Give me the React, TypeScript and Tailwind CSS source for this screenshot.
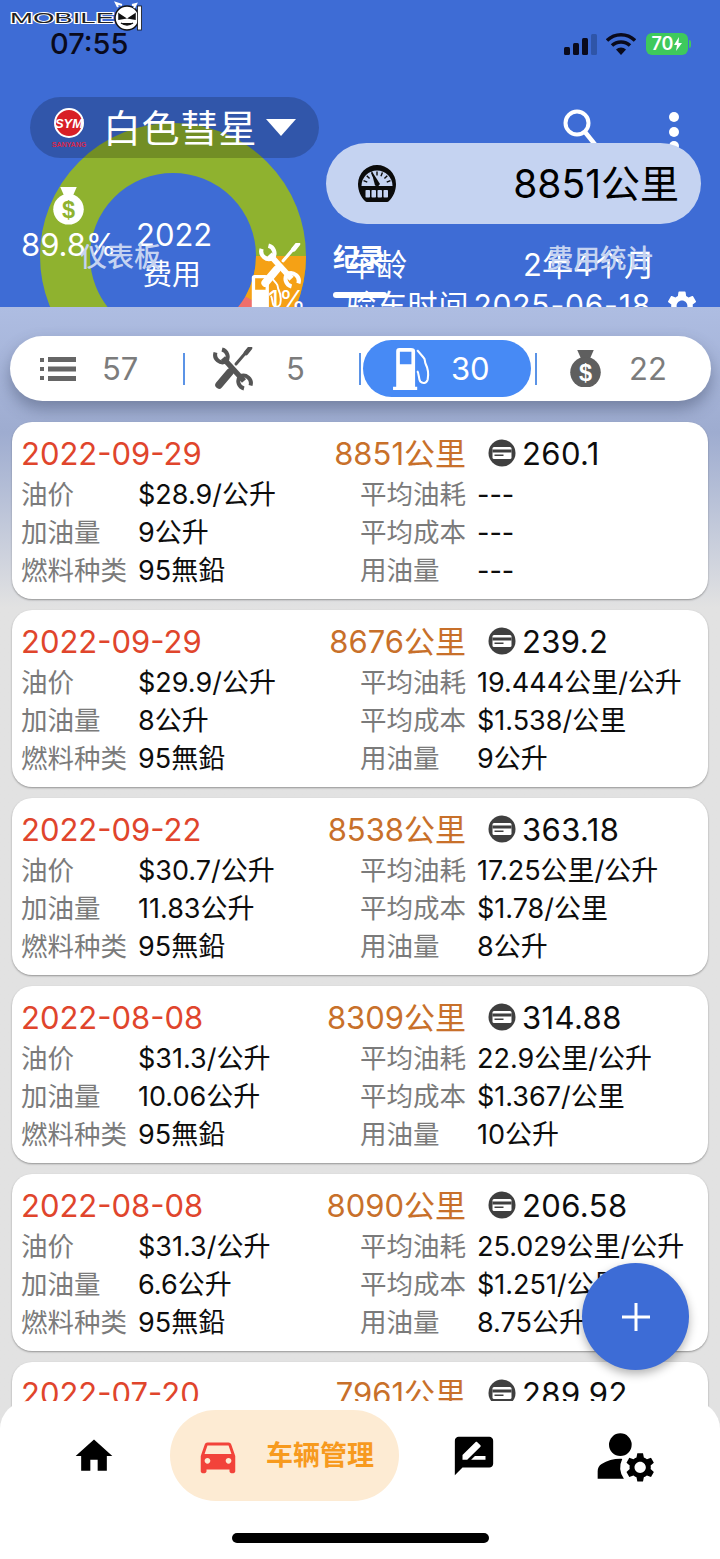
import React from "react";
import { MdHome, MdDirectionsCar, MdRateReview, MdManageAccounts, MdSettings } from "react-icons/md";

type Rec = { date: string; km: string; fee: string; price: string; vol: string; avg: string; cost: string; used: string };

const records: Rec[] = [
  { date: "2022-09-29", km: "8851公里", fee: "260.1", price: "$28.9/公升", vol: "9公升", avg: "---", cost: "---", used: "---" },
  { date: "2022-09-29", km: "8676公里", fee: "239.2", price: "$29.9/公升", vol: "8公升", avg: "19.444公里/公升", cost: "$1.538/公里", used: "9公升" },
  { date: "2022-09-22", km: "8538公里", fee: "363.18", price: "$30.7/公升", vol: "11.83公升", avg: "17.25公里/公升", cost: "$1.78/公里", used: "8公升" },
  { date: "2022-08-08", km: "8309公里", fee: "314.88", price: "$31.3/公升", vol: "10.06公升", avg: "22.9公里/公升", cost: "$1.367/公里", used: "10公升" },
  { date: "2022-08-08", km: "8090公里", fee: "206.58", price: "$31.3/公升", vol: "6.6公升", avg: "25.029公里/公升", cost: "$1.251/公里", used: "8.75公升" },
  { date: "2022-07-20", km: "7961公里", fee: "289.92", price: "$31.3/公升", vol: "9.06公升", avg: "---", cost: "---", used: "---" },
];

function MoneyBag({ size, color, dollar }: { size: number; color: string; dollar: string }) {
  return (
    <svg width={size} height={size * 1.14} viewBox="0 0 28 32">
      <path d="M7 0h14l-3.500 8h-7z" fill={color} />
      <circle cx="14" cy="19" r="13" fill={color} />
      <text x="14" y="26.500" textAnchor="middle" fontSize="20" fontWeight="700" fontFamily="Liberation Sans" fill={dollar}>$</text>
    </svg>
  );
}

function Pump({ size }: { size: number }) {
  return (
    <svg width={size * 0.95} height={size} viewBox="0 0 38 40">
      <path fillRule="evenodd" d="M4 3Q4 0 7 0h11q4 0 4 3v34h2v3H1v-3h3zM7.500 3.500v12h11v-12z" fill="#fff" />
      <path d="M24 2l6 7c2 2 1 4 2 6 2 4 3 10 2 15-1 4-5 4-7 2-2-3-1-8-3-10" fill="none" stroke="#fff" strokeWidth="2" />
    </svg>
  );
}

function Tools({ size, color }: { size: number; color: string }) {
  return (
    <svg width={size} height={size * 1.1} viewBox="0 0 40 44" fill="none" stroke={color}>
      <path d="M10 11L31 34" strokeWidth="5.500" />
      <path d="M2.500 5.500A7.500 7.500 0 0 0 13 14.500 7.500 7.500 0 0 0 9 2.500" strokeWidth="4" />
      <path d="M37.500 38.500A7.500 7.500 0 0 0 27 29.500 7.500 7.500 0 0 0 31 41.500" strokeWidth="4" />
      <path d="M35 3L23 17" strokeWidth="3" strokeLinecap="round" />
      <path d="M37 1L33 6" strokeWidth="4.500" strokeLinecap="round" />
      <path d="M17 25L6 38" strokeWidth="7.500" strokeLinecap="round" />
    </svg>
  );
}

function CardIcon() {
  return (
    <svg width="28" height="28" viewBox="0 0 28 28" className="shrink-0">
      <circle cx="14" cy="14" r="13.500" fill="#3f3f3f" />
      <rect x="4.500" y="8" width="19" height="12" rx="1.500" fill="#fff" />
      <rect x="4.500" y="10.500" width="19" height="3" fill="#3f3f3f" />
      <rect x="6.500" y="15.500" width="9" height="1.500" fill="#3f3f3f" />
    </svg>
  );
}

function Gauge() {
  const ticks = [-68, -45, -22, 0, 22, 45, 68];
  return (
    <svg width="40" height="38" viewBox="0 0 40 38">
      <path d="M1 19a19 19 0 0 1 38 0c0 7-3 13-7 17a3 3 0 0 1-2 1H10a3 3 0 0 1-2-1C4 32 1 26 1 19z" fill="#0b0b0b" />
      <path d="M4.500 21a15.500 15.500 0 0 1 31 0z" fill="#c5d3f1" />
      {ticks.map((a) => (
        <rect key={a} x="19.300" y="6.500" width="1.400" height="4" fill="#0b0b0b" transform={`rotate(${a} 20 21)`} />
      ))}
      <path d="M14 5l9 14-2 2.500-3-1z" fill="#0b0b0b" />
      {[8.500, 14.500, 20.500, 26.500].map((x) => (
        <rect key={x} x={x} y="25" width="4.500" height="7.500" rx="0.800" fill="#c5d3f1" />
      ))}
    </svg>
  );
}

function Logo() {
  return (
    <svg width="144" height="32" viewBox="0 0 144 32">
      <text x="2" y="23" fontSize="15" fontWeight="400" fontFamily="Liberation Sans" textLength="104" lengthAdjust="spacingAndGlyphs" fill="#222" stroke="#fff" strokeWidth="1.800" style={{ paintOrder: "stroke" }}>MOBILE</text>
      <ellipse cx="119" cy="18" rx="12" ry="12" fill="#fff" stroke="#111" strokeWidth="1.500" />
      <path d="M110 7l-2-4 6 2M124 5l4-1-2 4" fill="none" stroke="#fff" strokeWidth="2" />
      <path d="M111 14l6 4-6 1zM127 14l-6 4 6 1zM113 23q6 4 12 0" fill="#111" stroke="#111" strokeWidth="1.500" />
      <rect x="129.500" y="6" width="4" height="24" fill="#fff" stroke="#111" strokeWidth="0.800" />
    </svg>
  );
}

function Row({ a, b, c, d }: { a: string; b: string; c: string; d: string }) {
  return (
    <div className="grid grid-cols-[117px_222px_117px_1fr] h-[38px] items-center whitespace-nowrap leading-none">
      <span className="text-[26.500px] text-[#7b7b7b]">{a}</span>
      <span className="text-[27px] text-[#0d0d0d]">{b}</span>
      <span className="text-[26.500px] text-[#7b7b7b]">{c}</span>
      <span className="text-[27px] text-[#0d0d0d]">{d}</span>
    </div>
  );
}

function RecordCard({ r }: { r: Rec }) {
  return (
    <div className="h-[177px] shrink-0 rounded-[20px] bg-white shadow-[0_1px_2px_rgba(0,0,0,0.35)] pl-[9px] pr-[10px] pt-[13px]">
      <div className="flex items-center h-[36px] mb-[4px] text-[31px] leading-none whitespace-nowrap">
        <span className="w-[200px] text-[#e0452c]">{r.date}</span>
        <span className="w-[245px] text-right text-[#c8702a]">{r.km}</span>
        <span className="ml-[22px] flex items-center gap-[6px] text-[#0d0d0d] tracking-[0.4px]"><CardIcon />{r.fee}</span>
      </div>
      <Row a="油价" b={r.price} c="平均油耗" d={r.avg} />
      <Row a="加油量" b={r.vol} c="平均成本" d={r.cost} />
      <Row a="燃料种类" b="95無鉛" c="用油量" d={r.used} />
    </div>
  );
}

function Sep({ className = "" }: { className?: string }) {
  return <span className={"block w-[2px] h-[32px] bg-[#5b93e6] shrink-0 " + className} />;
}

function Header() {
  return (
    <header className="relative h-[307px] shrink-0 overflow-hidden bg-[#3e6cd5] text-white">
      <svg className="absolute left-[30px] top-[113px]" width="286" height="286" viewBox="-143 -143 286 286">
        <circle r="108" fill="none" stroke="#8fb22f" strokeWidth="50" />
        <path d="M108 0A108 108 0 0 1 94 53" fill="none" stroke="#f5a115" strokeWidth="50" />
        <path d="M94 53A108 108 0 0 1 80 72" fill="none" stroke="#ef6f6c" strokeWidth="50" />
      </svg>

      <div className="absolute left-[30px] top-[97px] w-[289px] h-[61px] rounded-full bg-black/20 flex items-center pl-[21px]">
        <svg width="36" height="42" viewBox="0 0 36 42" className="shrink-0">
          <circle cx="18" cy="16" r="14" fill="#d81f26" stroke="#fff" strokeWidth="2" />
          <text x="18" y="21" textAnchor="middle" fontSize="13" fontWeight="700" fontStyle="italic" fontFamily="Liberation Sans" fill="#fff">SYM</text>
          <text x="18" y="40" textAnchor="middle" fontSize="7" fontWeight="700" fontFamily="Liberation Sans" fill="#d8264a">SANYANG</text>
        </svg>
        <span className="ml-[16px] text-[38px] leading-none tracking-[0.5px] whitespace-nowrap">白色彗星</span>
        <span className="ml-[9px] w-0 h-0 border-l-[15px] border-r-[15px] border-t-[17px] border-l-transparent border-r-transparent border-t-white" />
      </div>

      <svg className="absolute left-[562px] top-[108px]" width="38" height="40" viewBox="0 0 38 40">
        <circle cx="15" cy="15" r="11.500" fill="none" stroke="#fff" strokeWidth="4" />
        <path d="M23 24l12 15" stroke="#fff" strokeWidth="4.500" />
      </svg>
      <div className="absolute left-[669px] top-[112px] flex flex-col gap-[4.500px]">
        <span className="w-[10px] h-[10px] rounded-full bg-white" />
        <span className="w-[10px] h-[10px] rounded-full bg-white" />
        <span className="w-[10px] h-[10px] rounded-full bg-white" />
      </div>

      <span className="absolute left-[21px] top-[227px] text-[31px] leading-[36px]">89.8%</span>
      <span className="absolute left-[136px] top-[216px] text-[31px] leading-[38px]">2022</span>
      <span className="absolute left-[143px] top-[257px] text-[29px] leading-[36px]">费用</span>
      <div className="absolute left-[52px] top-[187px]"><MoneyBag size={33} color="#fff" dollar="#8fb22f" /></div>
      <div className="absolute left-[259px] top-[243px]"><Tools size={42} color="#fff" /></div>
      <div className="absolute left-[248px] top-[275px]"><Pump size={38} /></div>
      <span className="absolute left-[268px] top-[285px] text-[27px] leading-[32px]">1%</span>

      <span className="absolute left-[345px] top-[247px] text-[31px] leading-[36px]">车龄</span>
      <span className="absolute left-[523px] top-[247px] text-[31px] leading-[36px] whitespace-nowrap">2年4个月</span>
      <span className="absolute left-[346px] top-[287px] text-[30px] leading-[36px] tracking-[0.8px] [word-spacing:-5px] whitespace-nowrap">验车时间 2025-06-18</span>
      <MdSettings className="absolute left-[664px] top-[288px] text-white" size={36} />

      <span className="absolute left-[80px] top-[240px] text-[27px] leading-[36px] font-medium text-[#c5d3f1]">仪表板</span>
      <span className="absolute left-[333px] top-[240px] text-[26px] leading-[36px] font-bold">纪录</span>
      <span className="absolute left-[547px] top-[240px] text-[26.500px] leading-[36px] font-medium text-[#c5d3f1]">费用统计</span>
      <span className="absolute left-[333px] top-[292px] w-[54px] h-[6px] rounded-full bg-white" />

      <div className="absolute left-[326px] top-[143px] w-[375px] h-[81px] rounded-full bg-[#c5d3f1] flex items-center justify-between pl-[31px] pr-[22px] text-black">
        <Gauge />
        <span className="text-[39px] leading-none whitespace-nowrap">8851公里</span>
      </div>

      <div className="absolute left-[8px] top-0"><Logo /></div>
      <div className="absolute left-[50px] top-[27px] text-[29px] leading-[34px] font-medium text-[#0a0a1c]">07:55</div>

      <div className="absolute left-[564px] top-[33px] flex items-end gap-[3px] h-[22px]">
        <span className="w-[6px] h-[8px] rounded-[1.500px] bg-[#0a0a1c]" />
        <span className="w-[6px] h-[12px] rounded-[1.500px] bg-[#0a0a1c]" />
        <span className="w-[6px] h-[17px] rounded-[1.500px] bg-[#0a0a1c]" />
        <span className="w-[6px] h-[21px] rounded-[1.500px] bg-[#2f55a8]" />
      </div>
      <svg className="absolute left-[606px] top-[33px]" width="30" height="22" viewBox="0 0 30 22">
        <path d="M1 7.500a20 20 0 0 1 28 0" fill="none" stroke="#0a0a1c" strokeWidth="3.500" />
        <path d="M6 12.500a13 13 0 0 1 18 0" fill="none" stroke="#0a0a1c" strokeWidth="3.500" />
        <path d="M15 22l-5-5.500a7.500 7.500 0 0 1 10 0z" fill="#0a0a1c" />
      </svg>
      <div className="absolute left-[646px] top-[33px] flex items-center">
        <span className="w-[42px] h-[22px] rounded-[6px] bg-[#3ec95c] flex items-center justify-center gap-px text-white text-[18px] leading-none font-semibold">
          70
          <svg width="8" height="14" viewBox="0 0 8 14"><path d="M5 0L0 8h3l-1 6 6-8H4.500z" fill="#fff" /></svg>
        </span>
        <span className="ml-px w-[2px] h-[8px] rounded-r bg-[#3ec95c]" />
      </div>
    </header>
  );
}

function Tabs() {
  return (
    <div className="mx-[10px] h-[65px] w-[701px] shrink-0 rounded-full bg-white shadow-[0_8px_16px_rgba(60,70,100,0.45)] flex items-center text-[31px] leading-none text-[#7c7c7c]">
      <div className="w-[173px] pl-[30px] flex items-center gap-[26px]">
        <svg width="36" height="24" viewBox="0 0 36 24" fill="#666">
          <rect x="0" y="1" width="4" height="4" /><rect x="8" y="0" width="28" height="5" />
          <rect x="0" y="10" width="4" height="4" /><rect x="8" y="9.500" width="28" height="5" />
          <rect x="0" y="19" width="4" height="4" /><rect x="8" y="19" width="28" height="5" />
        </svg>
        57
      </div>
      <Sep />
      <div className="w-[174px] pl-[28px] flex items-center gap-[33px]"><Tools size={40} color="#555" />5</div>
      <Sep />
      <div className="ml-[2px] w-[168px] h-[57px] rounded-full bg-[#478af5] text-white flex items-center pl-[29px] gap-[19px]"><Pump size={42} />30</div>
      <Sep className="ml-[4px]" />
      <div className="pl-[32px] flex items-center gap-[27px]"><MoneyBag size={33} color="#5f5f5f" dollar="#fff" />22</div>
    </div>
  );
}

function Nav() {
  return (
    <nav className="absolute left-0 bottom-0 w-[720px] h-[158px] rounded-t-[28px] bg-white">
      <div className="flex h-[91px] mt-[9px] items-center">
        <MdHome size={44} className="ml-[72px] text-black" />
        <div className="ml-[54px] w-[229px] h-[91px] rounded-full bg-[#fdebd3] flex items-center pl-[25px] gap-[25px]">
          <MdDirectionsCar size={46} className="text-[#f2433a]" />
          <span className="text-[27px] leading-none font-bold text-[#f79a1e]">车辆管理</span>
        </div>
        <MdRateReview size={46} className="ml-[52px] text-black" />
        <MdManageAccounts size={68} className="ml-[95px] text-black" />
      </div>
      <span className="absolute left-[232px] top-[132px] w-[257px] h-[10px] rounded-full bg-black" />
    </nav>
  );
}

export default function App() {
  return (
    <div className="relative w-[720px] h-[1559px] overflow-hidden flex flex-col bg-[#e4e4e4] font-['Inter','Noto_Sans_CJK_SC',sans-serif]">
      <Header />
      <main className="flex-1 min-h-0 overflow-hidden flex flex-col bg-gradient-to-b from-[#aebde2] from-0% via-[#9eacd0] via-[10%] to-[#e2e2e2] to-[24%]">
        <div className="mt-[29px]"><Tabs /></div>
        <div className="mt-[21px] mx-[12px] flex flex-col gap-[11px]">
          {records.map((r, i) => <RecordCard key={i} r={r} />)}
        </div>
      </main>
      <div className="absolute left-[582px] top-[1263px] w-[107px] h-[107px] rounded-full bg-[#3d6cd6] shadow-[0_4px_10px_rgba(0,0,0,0.3)] flex items-center justify-center">
        <svg width="28" height="28" viewBox="0 0 28 28"><path d="M14 0v28M0 14h28" stroke="#fff" strokeWidth="3" /></svg>
      </div>
      <Nav />
    </div>
  );
}
